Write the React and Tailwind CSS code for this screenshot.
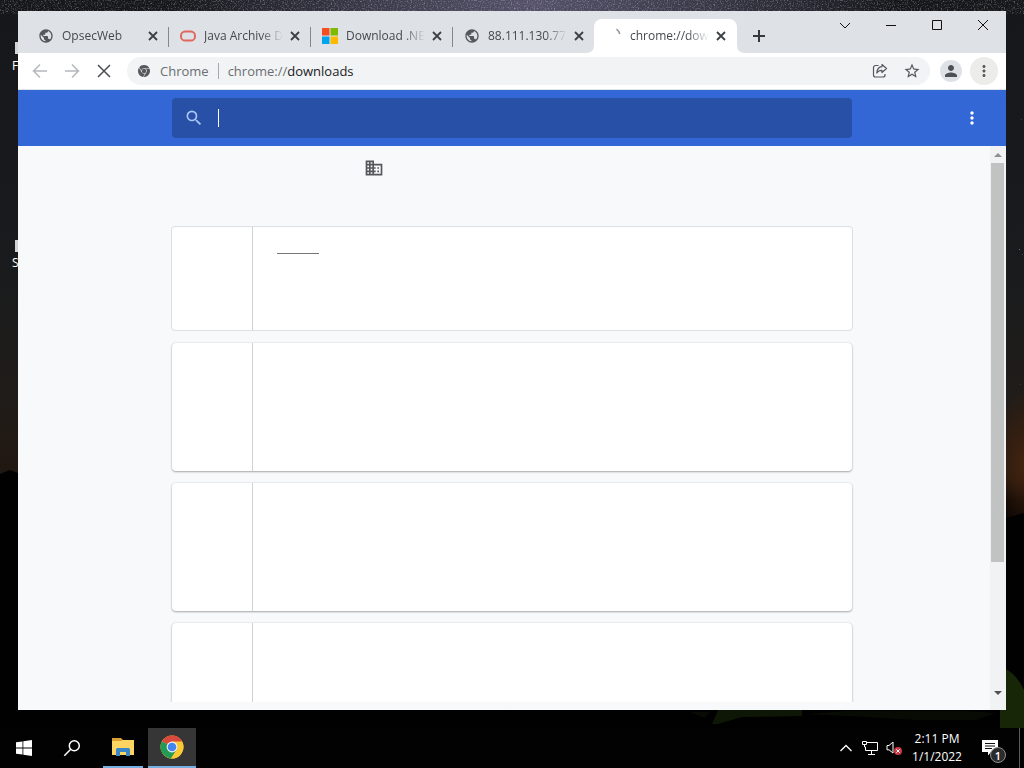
import React from "react";
import {
  MdPublic,
  MdSearch,
  MdMoreVert,
  MdDomain,
  MdStarBorder,
  MdPerson,
} from "react-icons/md";
import { SiGooglechrome } from "react-icons/si";

const STARS = Array.from({ length: 60 }, (_, i) => ({
  x: (i * 7919 + 131) % 1024,
  y: (i * 104729 + 17) % 400,
  o: 0.15 + ((i * 37) % 50) / 140,
}));

function Wallpaper() {
  return (
    <svg
      className="absolute inset-0 h-full w-full"
      viewBox="0 0 1024 768"
      preserveAspectRatio="none"
      aria-hidden="true"
    >
      <defs>
        <linearGradient id="sky" x1="0" y1="0" x2="0" y2="1">
          <stop offset="0" stopColor="#16171a" />
          <stop offset="0.35" stopColor="#191b1d" />
          <stop offset="0.52" stopColor="#201c19" />
          <stop offset="0.62" stopColor="#211710" />
          <stop offset="0.65" stopColor="#020202" />
          <stop offset="1" stopColor="#000000" />
        </linearGradient>
        <radialGradient id="milky" cx="0.52" cy="0" r="0.36">
          <stop offset="0" stopColor="#56536a" />
          <stop offset="0.5" stopColor="#373745" />
          <stop offset="1" stopColor="#373745" stopOpacity="0" />
        </radialGradient>
        <radialGradient id="glow">
          <stop offset="0" stopColor="#43230f" />
          <stop offset="1" stopColor="#43230f" stopOpacity="0" />
        </radialGradient>
        <filter id="dust" x="0" y="0" width="1" height="1">
          <feTurbulence type="fractalNoise" baseFrequency="0.7" numOctaves="2" seed="4" />
          <feColorMatrix values="0 0 0 0 0.7  0 0 0 0 0.7  0 0 0 0 0.8  2.2 0 0 0 -1.1" />
        </filter>
      </defs>
      <rect width="1024" height="768" fill="url(#sky)" />
      <rect width="1024" height="768" fill="url(#milky)" />
      <rect width="1024" height="14" filter="url(#dust)" opacity="0.5" />
      <ellipse cx="1024" cy="465" rx="34" ry="75" fill="url(#glow)" />
      {STARS.map((s, i) => (
        <rect key={i} x={s.x} y={s.y} width="1" height="1" fill="#c9c9dd" opacity={s.o} />
      ))}
      <path d="M0 474l10-4 8 3v295H0z" fill="#010101" />
      <path d="M1000 520l14-4 10-3v255h-24z" fill="#010101" />
      <path d="M1000 666q16 6 24 24v38h-24z" fill="#172607" />
      <path d="M712 724l6-14h84v6l-60 1-24 7z" fill="#0e1705" />
      <path d="M690 712h20l-6 6zM806 714l40-3h120l30 2-20 7h-60l-50-3z" fill="#070b04" />
    </svg>
  );
}

function CloseX({ className }) {
  return (
    <svg viewBox="0 0 10 10" className={className} aria-hidden="true">
      <path d="M1 1l8 8M9 1L1 9" stroke="currentColor" strokeWidth="1.8" fill="none" />
    </svg>
  );
}

function OracleIcon() {
  return (
    <svg viewBox="0 0 16 16" className="h-4 w-4" aria-hidden="true">
      <rect x="1" y="3.6" width="14" height="9" rx="4.2" fill="none" stroke="#e0675c" strokeWidth="2" />
    </svg>
  );
}

function MicrosoftIcon() {
  return (
    <svg viewBox="0 0 16 16" className="h-4 w-4" aria-hidden="true">
      <path d="M0 0h7.500v7.500H0z" fill="#f25022" />
      <path d="M8.500 0H16v7.500H8.500z" fill="#7fba00" />
      <path d="M0 8.500h7.500V16H0z" fill="#00a4ef" />
      <path d="M8.500 8.500H16V16H8.500z" fill="#ffb900" />
    </svg>
  );
}

function Spinner() {
  return (
    <svg viewBox="0 0 16 16" className="h-4 w-4" aria-hidden="true">
      <path d="M10.500 1.200Q13 3 13.800 6" fill="none" stroke="#8d9aa3" strokeWidth="1.500" />
    </svg>
  );
}

const TABS = [
  { title: "OpsecWeb", icon: <MdPublic className="h-4 w-4 text-[#54585d]" /> },
  { title: "Java Archive D", icon: <OracleIcon /> },
  { title: "Download .NE", icon: <MicrosoftIcon /> },
  { title: "88.111.130.77:", icon: <MdPublic className="h-4 w-4 text-[#54585d]" /> },
  { title: "chrome://dow", icon: <Spinner />, active: true },
];

function Flare({ className, d }) {
  return (
    <svg viewBox="0 0 8 8" className={`absolute bottom-0 h-2 w-2 ${className}`} aria-hidden="true">
      <path d={d} fill="#ffffff" />
    </svg>
  );
}

function Tab({ tab, divider }) {
  return (
    <div
      role="tab"
      aria-selected={!!tab.active}
      className={`relative flex h-[34px] items-center pl-3 ${
        tab.active ? "w-[143px] rounded-t-lg bg-white pr-2" : "w-[142px] pr-[7px]"
      }`}
    >
      {divider && <span className="absolute left-0 top-2 h-5 w-px bg-[#84888d]" />}
      {tab.active && <Flare className="-left-2" d="M8 0v8H0q8 0 8-8z" />}
      {tab.active && <Flare className="-right-2" d="M0 0v8h8q-8 0-8-8z" />}
      {tab.icon}
      <span className="ml-2 min-w-0 flex-1 overflow-hidden whitespace-nowrap text-xs text-[#45494d] [mask-image:linear-gradient(to_right,black_72%,transparent)]">
        {tab.title}
      </span>
      <button aria-label={`Close ${tab.title}`} className="ml-1 flex h-4 w-4 items-center justify-center text-[#3c4043]">
        <CloseX className="h-[10px] w-[10px]" />
      </button>
    </div>
  );
}

const CAPTION_BUTTONS = [
  { name: "Search tabs", d: "M3 6l5 5 5-5" },
  { name: "Minimize", d: "M3 8.500h10" },
  { name: "Maximize", d: "M3.500 3.500h9v9h-9z" },
  { name: "Close", d: "M3 3l10 10M13 3L3 13" },
];

function TitleBar() {
  return (
    <div className="flex h-[42px] shrink-0 bg-[#dee1e6] pl-2">
      <div role="tablist" className="flex items-end">
        {TABS.map((t, i) => (
          <Tab key={t.title} tab={t} divider={i > 0 && !t.active} />
        ))}
      </div>
      <button aria-label="New tab" className="mt-[11px] ml-2 flex h-7 w-7 items-center justify-center text-[#35383c]">
        <svg viewBox="0 0 14 14" className="h-[14px] w-[14px]" aria-hidden="true">
          <path d="M7 1v12M1 7h12" stroke="currentColor" strokeWidth="2" />
        </svg>
      </button>
      <div className="ml-auto flex h-7">
        {CAPTION_BUTTONS.map((b) => (
          <button key={b.name} aria-label={b.name} className="flex w-[46px] items-center justify-center text-[#111111]">
            <svg viewBox="0 0 16 16" className="h-4 w-4" aria-hidden="true">
              <path d={b.d} fill="none" stroke="currentColor" strokeWidth="1" />
            </svg>
          </button>
        ))}
      </div>
    </div>
  );
}

function NavButton({ label, className, children }) {
  return (
    <button aria-label={label} className={`flex h-7 w-8 items-center justify-center ${className}`}>
      <svg viewBox="0 0 16 16" className="h-4 w-4" fill="none" stroke="currentColor" strokeWidth="1.500" aria-hidden="true">
        {children}
      </svg>
    </button>
  );
}

function Toolbar() {
  return (
    <div className="flex h-[37px] shrink-0 items-center border-b border-[#dfe3ea] bg-white pl-[6px] pr-2">
      <NavButton label="Back" className="text-[#b5b7ba]">
        <path d="M15 8H2M8 1.500L1.500 8 8 14.500" />
      </NavButton>
      <NavButton label="Forward" className="text-[#b5b7ba]">
        <path d="M1 8h13M8 1.500L14.500 8 8 14.500" />
      </NavButton>
      <NavButton label="Stop" className="text-[#4a4d51]">
        <path d="M2 2l12 12M14 2L2 14" />
      </NavButton>
      <div className="ml-[7px] flex h-7 min-w-0 flex-1 items-center rounded-full bg-[#f1f3f4] pl-[11px] pr-[2px]">
        <SiGooglechrome className="h-3 w-3 text-[#54585d]" />
        <span className="ml-[10px] text-[13px] leading-5 text-[#6a6e73]">Chrome</span>
        <span className="mx-[9px] h-4 w-px bg-[#a5a8ac]" />
        <span className="text-[13px] leading-5 text-[#202124]">
          <span className="text-[#6a6e73]">chrome://</span>downloads
        </span>
        <div className="ml-auto flex">
          <NavButton label="Share this page" className="text-[#54585d]">
            <path
              d="M6.500 2.500H3.500a2 2 0 0 0-2 2v7.500a2 2 0 0 0 2 2h7.500a2 2 0 0 0 2-2v-1M10 1.500L14.500 5.500 10 9.500V7.300C7.500 7.200 6 8 4.800 10 5 6.500 6.800 4 10 3.700z"
              strokeWidth="1.200"
              strokeLinejoin="round"
            />
          </NavButton>
          <button aria-label="Bookmark this tab" className="flex h-7 w-8 items-center justify-center text-[#54585d]">
            <MdStarBorder className="h-[18px] w-[18px]" />
          </button>
        </div>
      </div>
      <button aria-label="Profile" className="ml-[10px] flex h-[22px] w-[22px] items-center justify-center rounded-full bg-[#dee1e6] text-[#4d5156]">
        <MdPerson className="h-[18px] w-[18px]" />
      </button>
      <button aria-label="Customize and control" className="ml-2 flex h-7 w-7 items-center justify-center rounded-full bg-[#ececea] text-[#54585d]">
        <MdMoreVert className="h-[18px] w-[18px]" />
      </button>
    </div>
  );
}

function DownloadsHeader() {
  return (
    <header className="grid h-14 shrink-0 grid-cols-[1fr_680px_1fr] items-center bg-[#3367d6]">
      <label className="col-start-2 flex h-10 items-center rounded-sm bg-[#2850a7] pl-3 text-[#a9c5f8]">
        <MdSearch className="h-5 w-5" />
        <span className="ml-[14px] h-[18px] w-px bg-white" />
        <input aria-label="Search downloads" type="text" className="h-8 min-w-0 flex-1 bg-transparent text-sm text-white outline-none" />
      </label>
      <button aria-label="More actions" className="mr-6 justify-self-end text-white">
        <MdMoreVert className="h-5 w-5" />
      </button>
    </header>
  );
}

const CARDS = [
  { id: 1, height: "h-[105px]", shadow: "border border-[#dddfe2]", bar: true },
  { id: 2, height: "h-32", shadow: "shadow-[0_1px_2px_0_rgba(60,64,67,0.4),0_0_2px_0_rgba(60,64,67,0.2)]" },
  { id: 3, height: "h-32", shadow: "shadow-[0_1px_2px_0_rgba(60,64,67,0.4),0_0_2px_0_rgba(60,64,67,0.2)]" },
  { id: 4, height: "h-32", shadow: "shadow-[0_1px_2px_0_rgba(60,64,67,0.4),0_0_2px_0_rgba(60,64,67,0.2)]" },
];

function Downloads() {
  return (
    <div className="flex min-h-0 flex-1 bg-[#f8f9fb]">
      <main className="mb-2 flex min-w-0 flex-1 flex-col items-center overflow-hidden pl-4">
        <div className="flex h-20 w-[680px] shrink-0 items-start pt-3 pl-48">
          <MdDomain className="h-5 w-5 text-[#54585d]" />
        </div>
        <div className="flex w-[682px] flex-col gap-3">
          {CARDS.map((c) => (
            <article
              key={c.id}
              className={`flex shrink-0 rounded bg-white ${c.height} ${c.shadow} ${c.bar ? "" : "mx-px"}`}
            >
              <div className="w-20 border-r border-[#cfd1d3] box-content" />
              {c.bar && <div className="mt-[26px] ml-6 h-px w-[42px] bg-[#74777a]" />}
            </article>
          ))}
        </div>
      </main>
      <div className="flex w-4 flex-col bg-[#f1f2f3] pl-px" aria-hidden="true">
        <svg viewBox="0 0 14 17" className="h-[17px] w-[14px]">
          <path d="M3 11l4-4 4 4z" fill="#8d8f91" />
        </svg>
        <div className="h-[399px] w-[13px] bg-[#c1c2c2]" />
        <svg viewBox="0 0 14 17" className="mt-auto mb-2 h-[17px] w-[14px]">
          <path d="M3 6l4 4 4-4z" fill="#505254" />
        </svg>
      </div>
    </div>
  );
}

function ChromeLogo() {
  return (
    <svg viewBox="0 0 24 24" className="h-6 w-6" aria-hidden="true">
      <circle cx="12" cy="12" r="11.500" fill="#fbc934" />
      <path d="M12 12L2 6.300A11.500 11.500 0 0 1 22 6.300z" fill="#d9493c" />
      <path d="M12 6.500h10.100A11.500 11.500 0 0 0 12 .5z" fill="#d9493c" />
      <path d="M12 12L2 6.300a11.500 11.500 0 0 0 9 17.200L16.700 14.800z" fill="#249a54" />
      <path d="M12 6.500h10A11.500 11.500 0 0 1 11 23.500l5.700-8.800z" fill="#fbc934" />
      <circle cx="12" cy="12" r="5.400" fill="#f1f3f4" />
      <circle cx="12" cy="12" r="4.300" fill="#4484ee" />
    </svg>
  );
}

function Taskbar() {
  return (
    <footer className="relative flex h-10 shrink-0 bg-[#020202] text-white">
      <button aria-label="Start" className="flex w-12 items-center justify-center">
        <svg viewBox="0 0 16 16" className="h-4 w-4" fill="#ffffff" aria-hidden="true">
          <path d="M0 2.300l6.500-.9v6.200H0zM7.300 1.300L16 0v7.600H7.300zM0 8.400h6.500v6.200L0 13.700zM7.300 8.400H16V16l-8.700-1.200z" />
        </svg>
      </button>
      <button aria-label="Search" className="flex w-12 items-center justify-center">
        <svg viewBox="0 0 18 18" className="h-[18px] w-[18px]" fill="none" stroke="#ffffff" strokeWidth="1.500" aria-hidden="true">
          <circle cx="11.300" cy="6.700" r="5" />
          <path d="M7.700 10.300L1.300 16.700" />
        </svg>
      </button>
      <button aria-label="File Explorer" className="ml-[7px] flex w-10 items-center justify-center border-b-2 border-[#76b0e0]">
        <svg viewBox="0 0 22 18" className="h-[18px] w-[22px]" aria-hidden="true">
          <path d="M0 0h9l2 2h11v5H0z" fill="#d9a031" />
          <path d="M0 3h9l2-1h11v15H0z" fill="#fbd462" />
          <path d="M4 18v-7l1-1h12l1 1v7h-4v-4H8v4z" fill="#3a87c8" />
        </svg>
      </button>
      <button aria-label="Google Chrome" className="ml-[5px] flex w-12 items-center justify-center border-b-2 border-[#76b0e0] bg-[#363636]">
        <ChromeLogo />
      </button>
      <div className="ml-auto flex items-center">
        <button aria-label="Show hidden icons" className="flex h-10 w-6 items-center justify-center">
          <svg viewBox="0 0 14 14" className="h-[14px] w-[14px]" fill="none" stroke="#ffffff" strokeWidth="1.300" aria-hidden="true">
            <path d="M1.500 10L7 4.500l5.500 5.500" />
          </svg>
        </button>
        <button aria-label="Network" className="flex h-10 w-6 items-center justify-center">
          <svg viewBox="0 0 16 14" className="h-[14px] w-4" fill="none" stroke="#ffffff" aria-hidden="true">
            <path d="M5 1.500h10.500v8H3.500V6M9.500 9.500v4M6 13.500h7M.5.5h4v3h-4zM2.500 3.500V6h1" />
          </svg>
        </button>
        <button aria-label="Volume muted" className="flex h-10 w-6 items-center justify-center">
          <svg viewBox="0 0 16 16" className="h-4 w-4" fill="none" aria-hidden="true">
            <path d="M1 5.500h2l4-3.500v11L3 9.800H1z" stroke="#ffffff" />
            <circle cx="12" cy="11" r="4" fill="#cf3a42" />
            <path d="M10.300 9.300l3.400 3.400M13.700 9.300l-3.400 3.400" stroke="#ffffff" />
          </svg>
        </button>
        <div className="ml-[6px] w-[50px] whitespace-nowrap text-center text-[12px] leading-[18px]">
          <div>2:11 PM</div>
          <div>1/1/2022</div>
        </div>
        <button aria-label="Notifications" className="relative ml-3 flex h-10 w-[50px] items-center pl-2">
          <svg viewBox="0 0 16 16" className="h-4 w-4" aria-hidden="true">
            <path d="M0 0h16v12H9l-3 3.500V12H0z" fill="#ffffff" />
            <path d="M3 3.500h10M3 6h10M3 8.500h7" stroke="#111111" />
          </svg>
          <span className="absolute top-[19px] left-4 flex h-4 w-4 items-center justify-center rounded-full border border-[#909090] bg-[#2b2b2b] text-[11px] font-semibold leading-none">
            1
          </span>
        </button>
        <span className="absolute top-0 right-1 h-10 w-px bg-[#5b5b5b]" />
      </div>
    </footer>
  );
}

export default function App() {
  return (
    <div className="relative flex h-screen flex-col overflow-hidden bg-black font-['Open_Sans','Noto_Sans',sans-serif]">
      <Wallpaper />
      <div className="absolute top-[58px] left-3 text-xs leading-4 text-white">F</div>
      <div className="absolute top-[42px] left-[15px] h-3 w-3 bg-[#d4d4d4]" />
      <div className="absolute top-[255px] left-3 text-xs leading-4 text-white">S</div>
      <div className="absolute top-[240px] left-[15px] h-3 w-3 bg-[#d4d4d4]" />
      <div className="relative flex min-h-0 flex-1 px-[18px] pt-[11px] pb-[18px]">
        <section className="flex min-w-0 flex-1 flex-col bg-white">
          <TitleBar />
          <Toolbar />
          <DownloadsHeader />
          <Downloads />
        </section>
      </div>
      <Taskbar />
    </div>
  );
}
